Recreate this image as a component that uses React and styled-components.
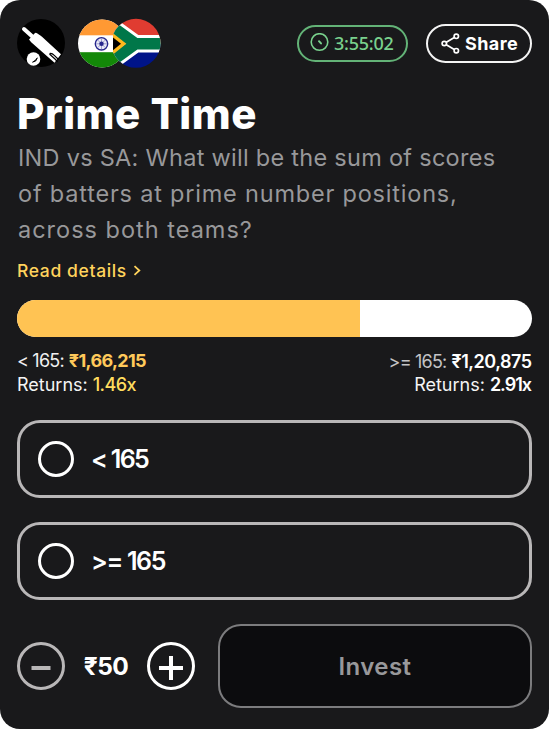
import React from 'react'
import styled, { createGlobalStyle } from 'styled-components'

const GlobalStyle = createGlobalStyle`
  * {
    box-sizing: border-box;
  }
  body {
    margin: 0;
    background: #ffffff;
    font-family: Inter, 'Noto Sans', sans-serif;
  }
  button {
    font-family: inherit;
    cursor: pointer;
  }
`

const Card = styled.div`
  width: 549px;
  height: 729px;
  padding: 18px 17px 0;
  border-radius: 20px;
  background: #19191b;
  color: #ffffff;
`

const Header = styled.div`
  height: 50px;
  display: flex;
  align-items: center;
`
const Flags = styled.div`
  display: flex;
  margin: 0 auto 0 13px;

  svg + svg {
    margin-left: -13px;
  }
`
const Timer = styled.div`
  width: 111px;
  height: 37px;
  padding: 0 0 1px 11px;
  display: flex;
  align-items: center;
  gap: 5px;
  border: 2px solid #63b377;
  border-radius: 19px;
  color: #79d18d;
  font-family: 'Noto Sans', sans-serif;
  font-size: 18px;
  font-weight: 500;
  letter-spacing: -0.25px;
`
const ShareButton = styled.button`
  width: 106px;
  height: 39px;
  margin-left: 18px;
  padding: 0 0 0 13px;
  display: flex;
  align-items: center;
  gap: 5px;
  border: 2px solid #f4f4f4;
  border-radius: 20px;
  background: none;
  color: #ffffff;
  font-size: 18px;
  font-weight: 700;
  letter-spacing: 0.4px;
`

const Title = styled.h1`
  margin: 22px 0 0;
  font-size: 42px;
  line-height: 48px;
  font-weight: 800;
  letter-spacing: 0.5px;
`
const Question = styled.p`
  margin: 2px 0 0 1px;
  color: #98989a;
  font-size: 23.5px;
  line-height: 36px;
`
const QuestionLine = styled.span`
  display: block;
  white-space: nowrap;
  letter-spacing: ${props => props.$spacing}px;
`
const DetailsLink = styled.a`
  margin-top: 10px;
  height: 24px;
  display: flex;
  align-items: center;
  gap: 6px;
  color: #ffd35c;
  font-size: 17.5px;
  font-weight: 500;
  letter-spacing: 0.63px;
`

const Bar = styled.div`
  height: 37px;
  margin-top: 18px;
  border-radius: 19px;
  background: #ffffff;
  overflow: hidden;
`
const BarFill = styled.div`
  height: 100%;
  background: #ffc353;
`

const Stats = styled.div`
  margin-top: 12px;
  display: flex;
  justify-content: space-between;
`
const Side = styled.div`
  font-size: 18px;
  line-height: 24px;
  white-space: nowrap;
`
const RightSide = styled(Side)`
  padding-top: 1px;
  line-height: 23px;
  text-align: right;
`
const Range = styled.span`
  margin-right: 5px;
  color: ${props => props.$color || '#f0f0f0'};
  letter-spacing: -0.8px;
`
const Label = styled.span`
  margin-right: 5px;
  color: #f4f4f4;
`
const Value = styled.span`
  margin-right: ${props => -props.$spacing}px;
  color: ${props => props.$color || '#ffffff'};
  font-weight: ${props => props.$weight || 600};
  letter-spacing: ${props => props.$spacing}px;
`

const Options = styled.div`
  margin-top: 23px;
  display: grid;
  gap: 24px;
`
const Option = styled.button`
  width: 100%;
  height: 78px;
  padding: 0 0 0 18px;
  display: flex;
  align-items: center;
  gap: 17px;
  border: 3px solid #b9b7b8;
  border-radius: 23px;
  background: none;
  color: #ffffff;
  font-size: 25px;
  font-weight: 600;
  letter-spacing: ${props => props.$spacing}px;
`
const Radio = styled.span`
  width: 36px;
  height: 36px;
  border: 3px solid #ffffff;
  border-radius: 50%;
`

const Footer = styled.div`
  margin-top: 24px;
  display: flex;
  align-items: center;
`
const RoundButton = styled.button`
  width: 48px;
  height: 48px;
  padding: 0;
  display: flex;
  align-items: center;
  justify-content: center;
  border: 3px solid ${props => props.$color};
  border-radius: 50%;
  background: none;
  color: ${props => props.$color};
`
const Amount = styled.span`
  width: 82px;
  text-align: center;
  font-size: 24.5px;
  font-weight: 700;
  letter-spacing: -0.6px;
`
const InvestButton = styled.button`
  flex: 1;
  height: 84px;
  margin-left: 23px;
  border: 2px solid #7c7c7e;
  border-radius: 23px;
  background: #0c0c0e;
  color: #98989a;
  font-size: 24px;
  font-weight: 600;
  letter-spacing: 0.4px;
`

const BatIcon = () => (
  <svg width="48" height="50" viewBox="0 0 48 50">
    <circle cx="24" cy="25" r="24" fill="#000" />
    <path d="M7 11L17 20" stroke="#fff" strokeWidth="4" strokeLinecap="round" />
    <path d="M12 21.5L17.5 15.4Q18.6 14.3 20 15.2L21.5 16.2Q23.5 17.4 25 18.8L44 36.2L37.5 44.8L14.2 24.3Z" fill="#fff" />
    <path d="M32.5 36L38.5 41.5L40.5 43.8M32.5 35.5Q35 34.8 37 37.2L41.8 41.8" fill="none" stroke="#000" strokeWidth="1.2" />
    <circle cx="16.5" cy="41" r="6.8" fill="#fff" />
    <path d="M15.5 44.2Q19.8 43.8 20.3 39.8Q18.8 42.6 15.5 44.2Z" fill="#000" stroke="#000" strokeWidth="0.8" />
  </svg>
)

const IndiaFlag = () => (
  <svg width="48" height="50" viewBox="0 0 48 50">
    <clipPath id="india"><circle cx="24" cy="25.5" r="24" /></clipPath>
    <g clipPath="url(#india)">
      <rect width="48" height="50" fill="#fff" />
      <rect width="48" height="17.3" fill="#ff9933" />
      <rect y="34.2" width="48" height="16" fill="#138808" />
    </g>
    <circle cx="23.5" cy="25.8" r="6.2" fill="#e9e9f6" stroke="#26268c" strokeWidth="1.4" />
    <g stroke="#8080bd" strokeWidth="0.7">
      <path d="M23.5 20.5V31M18.2 25.8H28.8M19.8 22.1L27.2 29.5M27.2 22.1L19.8 29.5" />
    </g>
    <circle cx="23.5" cy="25.8" r="2.2" fill="#26268c" />
  </svg>
)

const SouthAfricaFlag = () => (
  <svg width="48" height="50" viewBox="0 0 48 50">
    <clipPath id="sa"><circle cx="23" cy="25.3" r="24.5" /></clipPath>
    <g clipPath="url(#sa)">
      <rect width="48" height="26" fill="#e03c31" />
      <rect y="26" width="48" height="24" fill="#001489" />
      <path d="M-7.5 4L22.5 25.8L-7.5 47.6M22.5 25.8H50" fill="none" stroke="#fff" strokeWidth="17.5" />
      <path d="M-7.5 4L22.5 25.8L-7.5 47.6M22.5 25.8H50" fill="none" stroke="#007749" strokeWidth="11.5" />
      <path d="M-4 12L13.3 25.8L-4 39.6Z" fill="#ffb81c" />
      <path d="M-4 16.2L8 25.8L-4 35.4Z" fill="#000" />
    </g>
  </svg>
)

const ClockIcon = () => (
  <svg width="19" height="19" viewBox="0 0 19 19" fill="none" stroke="currentColor">
    <circle cx="9.5" cy="9" r="8.3" strokeWidth="1.6" />
    <path d="M9 8.2L11 10.4" strokeWidth="2" strokeLinecap="round" />
  </svg>
)

const ShareIcon = () => (
  <svg width="19" height="21" viewBox="0 0 19 21" fill="none" stroke="currentColor" strokeWidth="1.7">
    <circle cx="3.3" cy="10.5" r="2.2" />
    <circle cx="15.3" cy="3.3" r="2.2" />
    <circle cx="15.3" cy="17.7" r="2.2" />
    <path d="M5.3 9.3L13.3 4.5M5.3 11.7L13.3 16.5" />
  </svg>
)

const ChevronIcon = () => (
  <svg width="8" height="11" viewBox="0 0 8 11" fill="none" stroke="currentColor" strokeWidth="1.8">
    <path d="M1.5 1.2L6.3 5.5L1.5 9.8" />
  </svg>
)

const MinusIcon = () => (
  <svg width="24" height="28" viewBox="0 0 24 28" stroke="currentColor" strokeWidth="4">
    <path d="M2.5 16H21.5" />
  </svg>
)

const PlusIcon = () => (
  <svg width="24" height="28" viewBox="0 0 24 28" stroke="currentColor" strokeWidth="4">
    <path d="M0 16H24M12 4V28" />
  </svg>
)

const pool = { under: 343, total: 515 }

const App = () => (
  <Card>
    <GlobalStyle />
    <Header>
      <BatIcon />
      <Flags>
        <IndiaFlag />
        <SouthAfricaFlag />
      </Flags>
      <Timer><ClockIcon />3:55:02</Timer>
      <ShareButton><ShareIcon />Share</ShareButton>
    </Header>

    <Title>Prime Time</Title>
    <Question>
      <QuestionLine $spacing={0.28}>IND vs SA: What will be the sum of scores</QuestionLine>
      <QuestionLine $spacing={0.8}>of batters at prime number positions,</QuestionLine>
      <QuestionLine $spacing={1}>across both teams?</QuestionLine>
    </Question>
    <DetailsLink>Read details <ChevronIcon /></DetailsLink>

    <Bar>
      <BarFill style={{ width: `${(pool.under / pool.total) * 100}%` }} />
    </Bar>
    <Stats>
      <Side>
        <div><Range>&lt; 165:</Range><Value $color="#ffc95a" $weight={700} $spacing={-0.65}>₹1,66,215</Value></div>
        <div><Label>Returns:</Label><Value $color="#ffdc5e" $weight={500} $spacing={-0.6}>1.46x</Value></div>
      </Side>
      <RightSide>
        <div><Range $color="#c4c4c6">&gt;= 165:</Range><Value $spacing={-0.48}>₹1,20,875</Value></div>
        <div><Label>Returns:</Label><Value $spacing={-1}>2.91x</Value></div>
      </RightSide>
    </Stats>

    <Options>
      <Option $spacing={-1.65}><Radio />&lt; 165</Option>
      <Option $spacing={-1.35}><Radio />&gt;= 165</Option>
    </Options>

    <Footer>
      <RoundButton $color="#b9b7b8"><MinusIcon /></RoundButton>
      <Amount>₹50</Amount>
      <RoundButton $color="#ffffff"><PlusIcon /></RoundButton>
      <InvestButton>Invest</InvestButton>
    </Footer>
  </Card>
)

export default App
